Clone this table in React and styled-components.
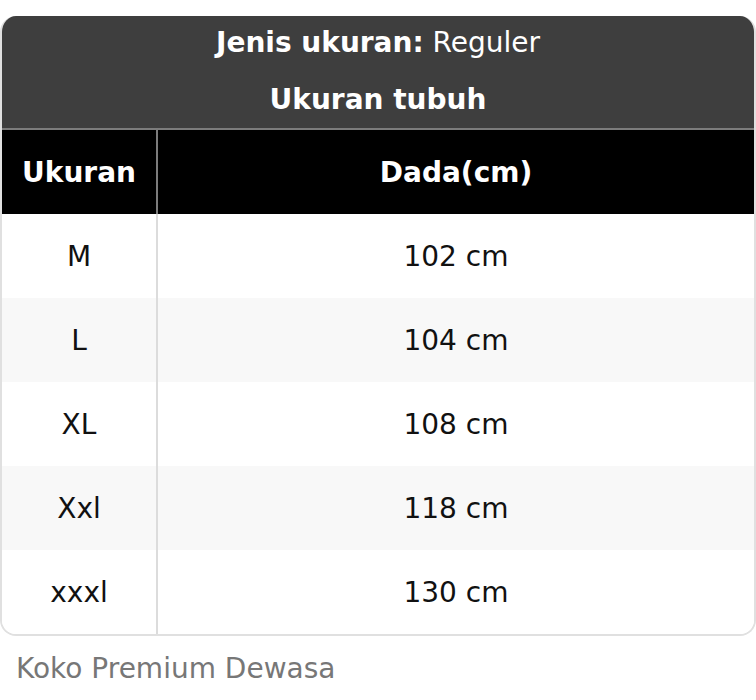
import React from "react";
import styled, { createGlobalStyle } from "styled-components";

const Global = createGlobalStyle`
  html, body { margin: 0; padding: 0; background: #fff; }
  body { font-family: "DejaVu Sans", sans-serif; }
`;

const Page = styled.div`
  padding-top: 16px;
`;

const Card = styled.div`
  border: 2px solid #e0e0e0;
  border-top: none;
  border-radius: 16px;
  overflow: hidden;
  width: 752px;
`;

const Title = styled.div`
  background: #3e3e3e;
  color: #fff;
  text-align: center;
  font-size: 28px;
  display: flex;
  flex-direction: column;
  margin: 0 -2px;
`;

const TitleLine = styled.div`
  height: 56px;
  line-height: 56px;
  font-weight: ${(p) => (p.$bold ? "bold" : "normal")};
  &:first-child { line-height: 54px; }
`;

const Table = styled.div`
  display: grid;
  grid-template-columns: 154px 1fr;
`;

const HeadCell = styled.div`
  background: #000;
  color: #fff;
  font-weight: bold;
  font-size: 28px;
  height: 84px;
  display: flex;
  align-items: center;
  justify-content: center;
  border-top: 2px solid #7c7c7c;
  border-left: ${(p) => (p.$divider ? "2px solid #7c7c7c" : "none")};
`;

const Cell = styled.div`
  background: ${(p) => (p.$alt ? "#f8f8f8" : "#fff")};
  color: #111;
  font-size: 28px;
  height: 84px;
  display: flex;
  align-items: center;
  justify-content: center;
  border-left: ${(p) => (p.$divider ? "2px solid #dcdcdc" : "none")};
`;

const Caption = styled.div`
  color: #777;
  font-size: 28px;
  padding: 16px 0 0 16px;
`;

const rows = [
  ["M", "102 cm"],
  ["L", "104 cm"],
  ["XL", "108 cm"],
  ["Xxl", "118 cm"],
  ["xxxl", "130 cm"],
];

export default function App() {
  return (
    <Page>
      <Global />
      <Card>
        <Title>
          <TitleLine>
            <b>Jenis ukuran:</b> Reguler
          </TitleLine>
          <TitleLine $bold>Ukuran tubuh</TitleLine>
        </Title>
        <Table>
          <HeadCell>Ukuran</HeadCell>
          <HeadCell $divider>Dada(cm)</HeadCell>
          {rows.map(([s, d], i) => (
            <React.Fragment key={s}>
              <Cell $alt={i % 2 === 1}>{s}</Cell>
              <Cell $alt={i % 2 === 1} $divider>
                {d}
              </Cell>
            </React.Fragment>
          ))}
        </Table>
      </Card>
      <Caption>Koko Premium Dewasa</Caption>
    </Page>
  );
}
